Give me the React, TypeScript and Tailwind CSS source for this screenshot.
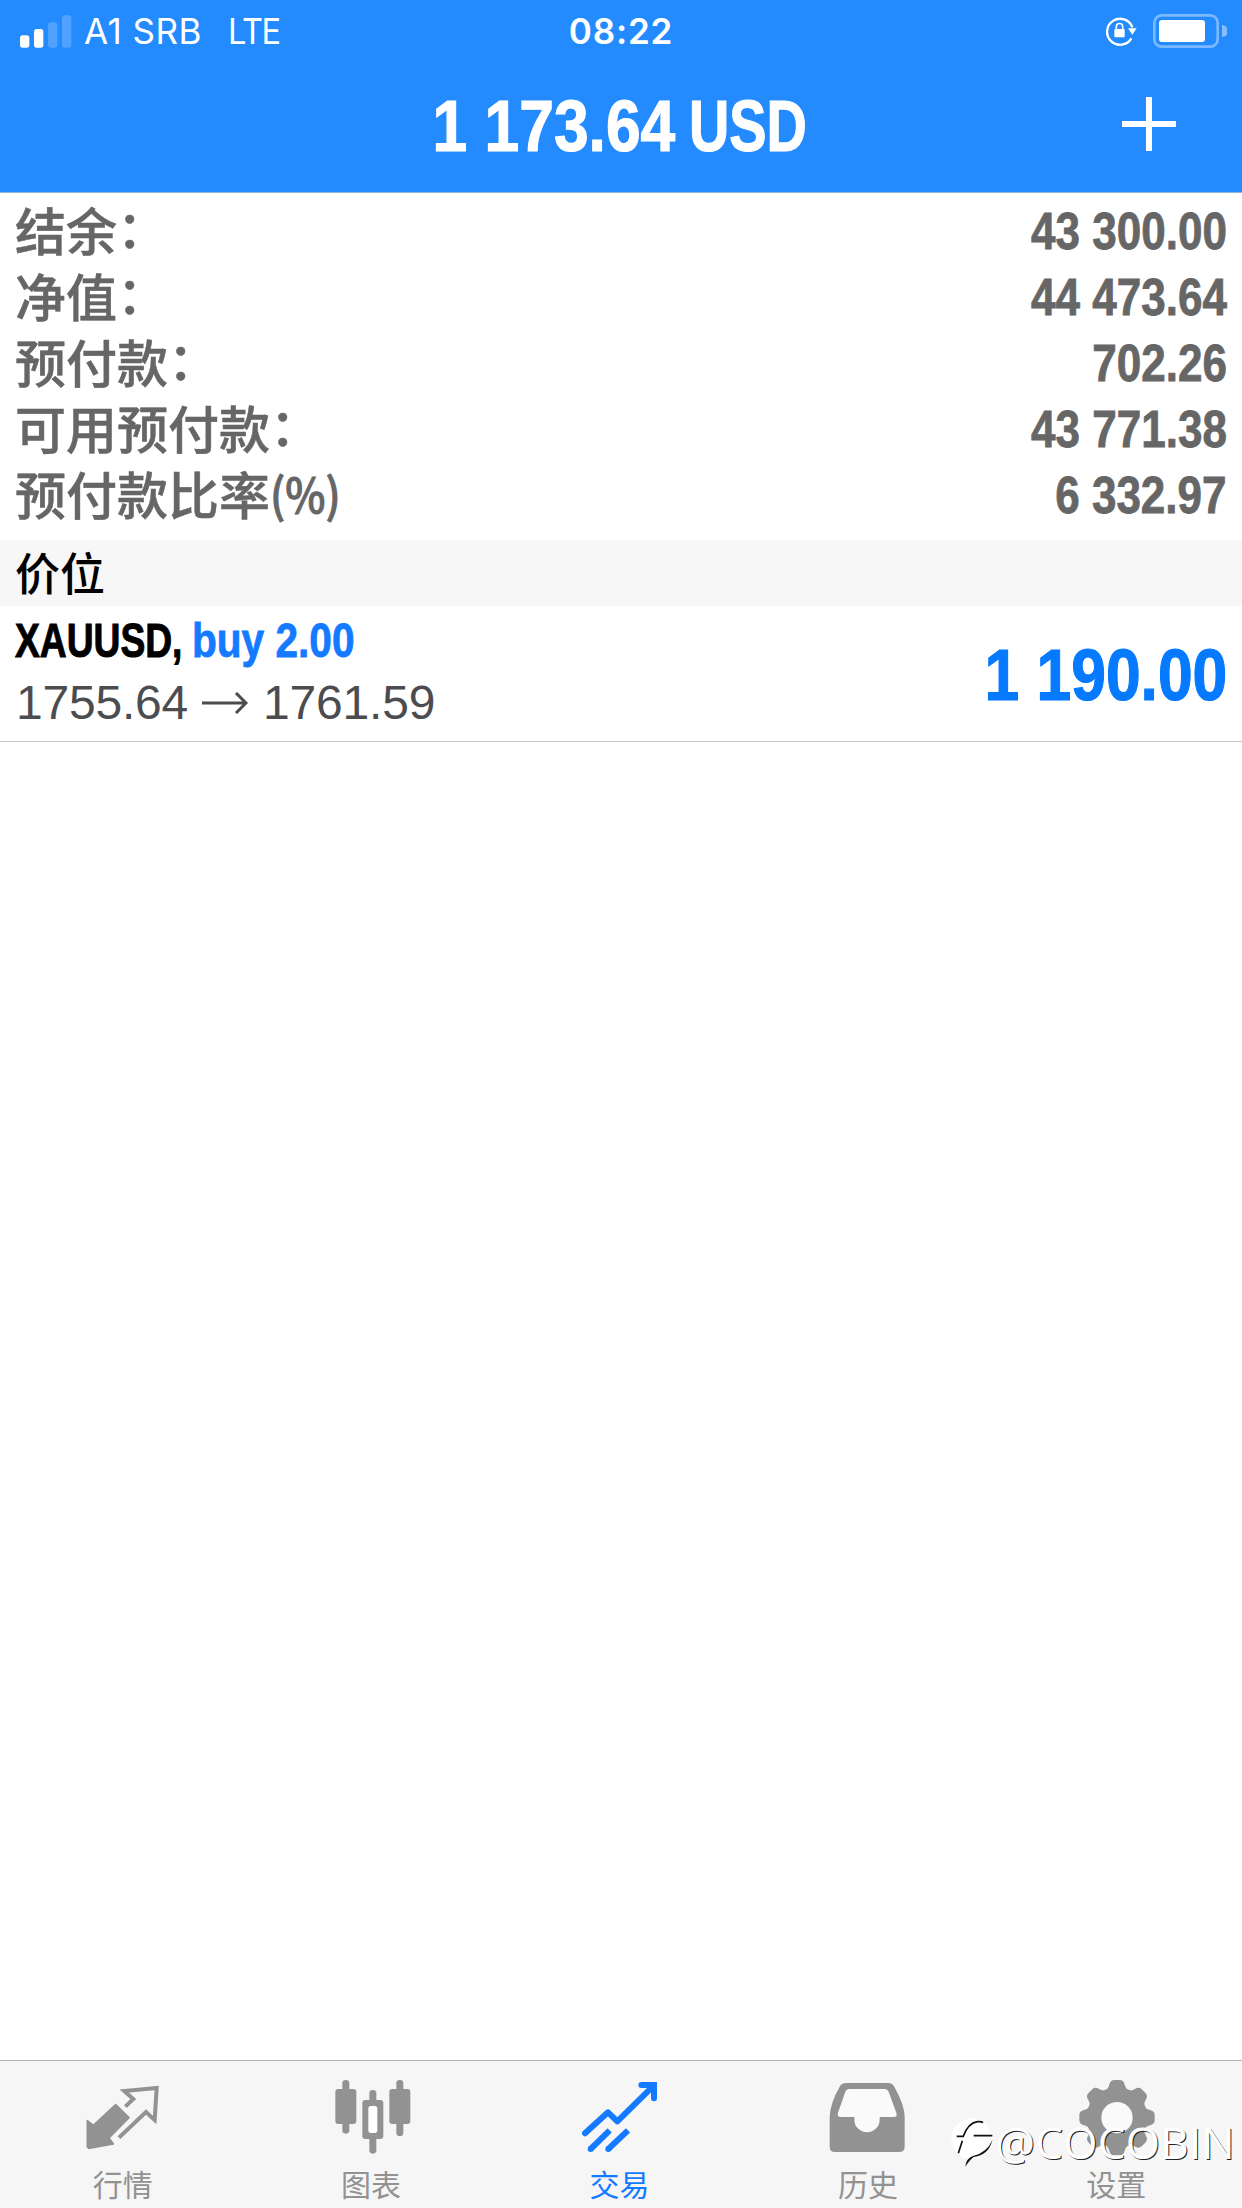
import type { ReactNode } from "react";
import clsx from "clsx";

const cjk = "font-['Noto_Sans_CJK_SC',sans-serif]";
const sans = "font-['Liberation_Sans',sans-serif]";

const summary = [
  { label: "结余", suffix: "：", value: "43 300.00" },
  { label: "净值", suffix: "：", value: "44 473.64" },
  { label: "预付款", suffix: "：", value: "702.26" },
  { label: "可用预付款", suffix: "：", value: "43 771.38" },
  { label: "预付款比率", suffix: "(%)", value: "6 332.97" },
];

function SignalIcon() {
  return (
    <svg width="52" height="33" viewBox="0 0 156 99" fill="#fff">
      <rect x="0" y="61" width="28" height="37" rx="8" />
      <rect x="42" y="42" width="28" height="56" rx="8" />
      <rect x="84" y="22" width="28" height="76" rx="8" opacity="0.2" />
      <rect x="126" y="1" width="28" height="97" rx="8" opacity="0.2" />
    </svg>
  );
}

function RotationLockIcon() {
  return (
    <svg width="32" height="30" viewBox="0 0 96 90" fill="none" stroke="#fff">
      <path d="M79 67A39 39 0 1 1 82 34" strokeWidth="7" />
      <path d="M69 37H95L82 56Z" fill="#fff" stroke="none" />
      <rect x="28" y="39" width="31" height="25" rx="3" fill="#fff" stroke="none" />
      <path d="M34 41V32a9.500 9.500 0 0 1 19 0V41" strokeWidth="5" />
    </svg>
  );
}

function BatteryIcon() {
  return (
    <svg width="74" height="34" viewBox="0 0 222 102">
      <rect x="4" y="4" width="190" height="94" rx="22" fill="none" stroke="#fff" strokeOpacity="0.4" strokeWidth="8" />
      <rect x="18" y="18" width="138" height="66" rx="10" fill="#fff" />
      <path d="M207 33a18 18 0 0 1 0 36z" fill="#fff" fillOpacity="0.45" />
    </svg>
  );
}

function TabIcon({ children }: { children: ReactNode }) {
  return (
    <svg width="80" height="80" viewBox="0 0 240 240" fill="currentColor">
      {children}
    </svg>
  );
}

function QuotesIcon() {
  return (
    <TabIcon>
      <path
        d="M10 134L28 148L95 86L135 125L75 186L88 204L14 217L10 213Z"
        stroke="currentColor"
        strokeWidth="5"
        strokeLinejoin="round"
      />
      <path
        d="M124 92L148 69L121 45L218 36L212 132L186 108L105 185"
        fill="none"
        stroke="currentColor"
        strokeWidth="12"
      />
    </TabIcon>
  );
}

function ChartIcon() {
  return (
    <TabIcon>
      <rect x="28" y="12" width="21" height="161" rx="10" />
      <rect x="7" y="39" width="63" height="105" rx="9" />
      <rect x="109" y="42" width="21" height="191" rx="10" />
      <rect x="88" y="72" width="63" height="117" rx="9" />
      <rect x="106" y="90" width="27" height="81" rx="8" fill="#fff" />
      <rect x="190" y="12" width="21" height="168" rx="10" />
      <rect x="169" y="39" width="63" height="105" rx="9" />
    </TabIcon>
  );
}

function TradeIcon() {
  return (
    <TabIcon>
      <g fill="none" stroke="currentColor" strokeWidth="18">
        <path d="M12 172L81 109L109 136L218 29" strokeLinejoin="round" strokeLinecap="round" />
        <path d="M181 27H219V67" strokeLinecap="round" />
        <path d="M29 219L86 163" />
        <path d="M82 219L141 163" />
      </g>
      <circle cx="29" cy="219" r="9" />
      <circle cx="82" cy="219" r="9" />
    </TabIcon>
  );
}

function HistoryIcon() {
  return (
    <TabIcon>
      <path d="M52 21H178Q190 21 196 32Q227 88 227 122V212Q227 228 211 228H18Q2 228 2 212V122Q4 80 32 32Q38 21 52 21Z" />
      <path
        d="M60 39H168Q175 39 179 47L202 110Q206 123 194 123H152V131A38 38 0 0 1 76 131V123H36Q23 123 27 110L49 47Q52 39 60 39Z"
        fill="#fafafa"
      />
    </TabIcon>
  );
}

function SettingsIcon() {
  const teeth = [0, 45, 90, 135, 180, 225, 270, 315];
  return (
    <TabIcon>
      <circle cx="117" cy="125" r="91" />
      {teeth.map((angle) => (
        <path
          key={angle}
          d="M82 45Q92 36 94 26Q97 12 109 12H125Q137 12 140 26Q142 36 152 45Z"
          transform={`rotate(${angle} 117 125)`}
        />
      ))}
      <circle cx="117" cy="125" r="47" fill="#fafafa" />
    </TabIcon>
  );
}

const tabs = [
  { label: "行情", icon: <QuotesIcon /> },
  { label: "图表", icon: <ChartIcon /> },
  { label: "交易", icon: <TradeIcon />, active: true },
  { label: "历史", icon: <HistoryIcon /> },
  { label: "设置", icon: <SettingsIcon /> },
];

function Header() {
  return (
    <header className="h-[193px] border-b border-[#8fb4dc] bg-[#248bff] text-white">
      <div className="grid h-[62px] grid-cols-3 items-center px-5 font-['Inter',sans-serif] text-[35px]">
        <div className="flex items-center">
          <SignalIcon />
          <span className="ml-3 whitespace-pre tracking-[0.5px]">A1 SRB</span>
          <span className="ml-[26px] origin-left scale-x-[0.93] tracking-[-1.5px]">LTE</span>
        </div>
        <span className="text-center font-semibold tracking-[0.8px]">08:22</span>
        <div className="-mr-[5px] flex items-center justify-end gap-4">
          <RotationLockIcon />
          <BatteryIcon />
        </div>
      </div>
      <div className="grid h-[126px] grid-cols-[1fr_auto_1fr] items-center">
        <span />
        <h1
          className={clsx(
            sans,
            "mt-[1px] mr-[6px] flex gap-[13px] text-[72px] leading-[126px] font-bold whitespace-nowrap [-webkit-text-stroke:1.2px_#fff]",
          )}
        >
          <span className="origin-right scale-x-[0.866]">1 173.64</span>
          <span className="origin-left scale-x-[0.775]">USD</span>
        </h1>
        <svg
          className="mr-[66px] mb-[3px] justify-self-end"
          width="54"
          height="54"
          viewBox="0 0 54 54"
          stroke="#fff"
          strokeWidth="6"
        >
          <path d="M27 0V54M0 27H54" />
        </svg>
      </div>
    </header>
  );
}

function Position() {
  return (
    <div className="flex h-[136px] items-center justify-between border-b border-[#c4c4c6] px-[15px]">
      <div className={clsx(sans, "-mt-[3px] text-[48px] leading-[62px]")}>
        <p className="flex font-bold whitespace-nowrap text-black">
          <span className="w-[177px] origin-left scale-x-[0.775] [-webkit-text-stroke:1px_#000]">XAUUSD,</span>
          <span className="origin-left scale-x-[0.846] text-[#147aff] [-webkit-text-stroke:0.8px_#147aff]">buy 2.00</span>
        </p>
        <p className="ml-[1px] flex items-center tracking-[-0.2px] text-[#4c4c50]">
          1755.64
          <svg className="mr-[15px] ml-[14px]" width="46" height="22" viewBox="0 0 46 22" fill="none" stroke="currentColor" strokeWidth="3">
            <path d="M0 11H44M34 1L44 11L34 21" />
          </svg>
          1761.59
        </p>
      </div>
      <span
        className={clsx(
          sans,
          "mt-[3px] origin-right scale-x-[0.866] text-[72px] font-bold text-[#057aff] [-webkit-text-stroke:1.2px_#057aff]",
        )}
      >
        1 190.00
      </span>
    </div>
  );
}

function Watermark() {
  return (
    <div className="absolute right-[7px] bottom-[36px] flex items-center text-white">
      <svg className="mt-[1px]" width="42" height="50" viewBox="0 0 126 150">
        <circle cx="62" cy="62" r="61" fill="#fff" />
        <path d="M17 55H37Q52 14 80 11Q92 10 96 14" fill="none" stroke="#111" strokeWidth="5" />
        <path d="M68 53H124M34 68L22 106" stroke="#111" strokeWidth="5" />
        <path d="M124 66Q113 112 68 117Q56 126 43 146Q45 120 68 113Q108 104 124 66Z" fill="#111" />
      </svg>
      <span className="ml-[2px] font-['Open_Sans',sans-serif] text-[44px] leading-[60px] font-normal tracking-[0.3px] [text-shadow:1px_1px_0_#222]">
        @COCOBIN
      </span>
    </div>
  );
}

export default function App() {
  return (
    <div className="relative flex h-[2208px] w-[1242px] flex-col overflow-hidden bg-white">
      <Header />
      <dl className="h-[347px] px-[15px] pt-[6px] text-[51px] leading-[66px] text-[#666]">
        {summary.map(({ label, suffix, value }) => (
          <div key={label} className="flex h-[66px] justify-between">
            <dt className={clsx(cjk, "-mt-[3px] flex font-medium [-webkit-text-stroke:0.5px_#666]")}>
              {label}
              <span className={suffix === "：" ? "-mt-[3px]" : "origin-left scale-x-[0.91] text-[47px] [-webkit-text-stroke:1px_#666]"}>
                {suffix}
              </span>
            </dt>
            <dd className={clsx(sans, "origin-right scale-x-[0.863] font-bold [-webkit-text-stroke:0.8px_#666]")}>{value}</dd>
          </div>
        ))}
      </dl>
      <h2 className={clsx(cjk, "h-[66px] bg-[#f7f7f7] px-[15px] text-[45px] leading-[64px] font-medium text-black")}>
        价位
      </h2>
      <Position />
      <main className="flex-1" />
      <nav className="grid h-[148px] grid-cols-5 border-t border-[#b2b2b2] bg-[#f6f6f6] pt-[15px]">
        {tabs.map(({ label, icon, active }) => (
          <div key={label} className={clsx("flex flex-col items-center", active ? "text-[#147aff]" : "text-[#929292]")}>
            {icon}
            <span className={clsx(cjk, "mt-[7px] mr-[3px] text-[30px] leading-[40px]")}>{label}</span>
          </div>
        ))}
      </nav>
      <Watermark />
    </div>
  );
}
